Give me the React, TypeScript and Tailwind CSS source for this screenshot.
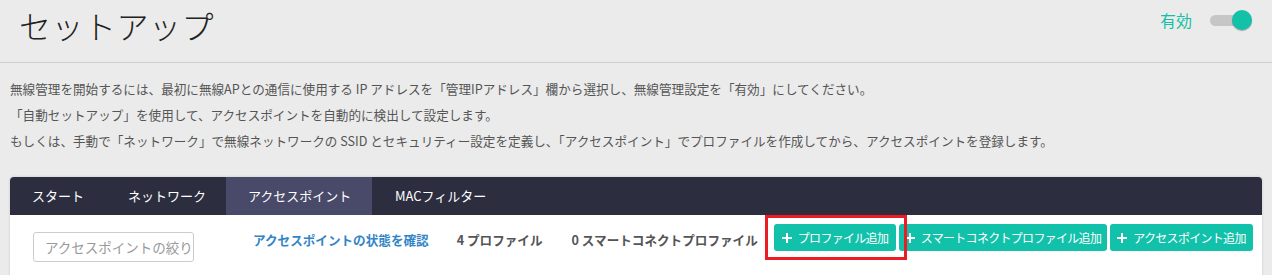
import React from "react";

const font = {
  fontFamily: '"Noto Sans CJK JP", "Noto Sans", "Liberation Sans", sans-serif',
};

function Plus() {
  return (
    <svg width="10" height="10" viewBox="0 0 10 10" className="shrink-0">
      <path d="M5 0v10M0 5h10" stroke="white" strokeWidth="2" />
    </svg>
  );
}

function Btn({ label, w }: { label: string; w: string }) {
  return (
    <button
      className={`${w} h-[27px] flex items-center justify-center gap-[6px] rounded-[3px] bg-[#12c1aa] text-white text-[12px] tracking-[-0.7px] leading-none whitespace-nowrap`}
    >
      <Plus />
      <span>{label}</span>
    </button>
  );
}

export default function App() {
  return (
    <div className="w-[1272px] h-[275px] bg-[#ebebeb] overflow-hidden text-[#555]" style={font}>
      <div className="h-[63px] border-b border-[#cfcfcf] flex items-start justify-between pl-[19px] pr-[20px]">
        <h1 className="text-[32px] font-light text-[#222] leading-none mt-[9px] tracking-[0.5px]">セットアップ</h1>
        <div className="flex items-center mt-[8px] gap-[18px]">
          <span className="text-[16px] text-[#17bfa8]">有効</span>
          <div className="relative w-[42px] h-[20px] flex items-center">
            <div className="w-[36px] h-[11px] rounded-full bg-[#c6c6c6]" />
            <div className="absolute right-0 top-0 w-[20px] h-[20px] rounded-full bg-[#13c0a8] shadow-[0_1px_1px_rgba(0,0,0,0.3)]" />
          </div>
        </div>
      </div>
      <div className="pl-[10px] pt-[13px] text-[12.6px] leading-[26px] text-[#555]">
        <p>無線管理を開始するには、最初に無線APとの通信に使用する IP アドレスを「管理IPアドレス」欄から選択し、無線管理設定を「有効」にしてください。</p>
        <p>「自動セットアップ」を使用して、アクセスポイントを自動的に検出して設定します。</p>
        <p>もしくは、手動で「ネットワーク」で無線ネットワークの SSID とセキュリティー設定を定義し、「アクセスポイント」でプロファイルを作成してから、アクセスポイントを登録します。</p>
      </div>
      <div className="mx-[10px] mt-[23px] rounded-[4px] bg-white shadow-[0_0_3px_rgba(0,0,0,0.15)] overflow-hidden h-[120px]">
        <div className="h-[38px] bg-[#2c2d3f] flex text-white text-[13px]">
          <div className="w-[96px] pl-[22px] flex items-center">スタート</div>
          <div className="w-[120px] pl-[22px] flex items-center">ネットワーク</div>
          <div className="w-[146px] pl-[22px] flex items-center bg-[#494a69]">アクセスポイント</div>
          <div className="w-[134px] pl-[23px] flex items-center">MACフィルター</div>
        </div>
        <div className="flex items-start pl-[23px] pr-[9px]">
          <div className="mt-[17px] w-[161px] h-[30px] border border-[#ccc] rounded-[3px] flex items-center pl-[11px] overflow-hidden whitespace-nowrap text-[13.5px] text-[#999]">
            アクセスポイントの絞り込み
          </div>
          <a className="ml-[59px] mt-[16px] text-[12.6px] font-bold text-[#3385c6] whitespace-nowrap">アクセスポイントの状態を確認</a>
          <span className="ml-[28px] mt-[16px] text-[12.6px] font-bold text-[#555] whitespace-nowrap">4 プロファイル</span>
          <span className="ml-[29px] mt-[16px] text-[12.6px] font-bold text-[#555] whitespace-nowrap">0 スマートコネクトプロファイル</span>
          <div className="ml-auto mt-[9px] flex gap-[3px]">
            <div className="relative">
              <Btn label="プロファイル追加" w="w-[122px]" />
              <div className="absolute -left-[9px] -top-[9px] -right-[11px] -bottom-[9px] border-[3px] border-[#ec1c24] pointer-events-none" />
            </div>
            <Btn label="スマートコネクトプロファイル追加" w="w-[208px]" />
            <Btn label="アクセスポイント追加" w="w-[143px]" />
          </div>
        </div>
      </div>
    </div>
  );
}
